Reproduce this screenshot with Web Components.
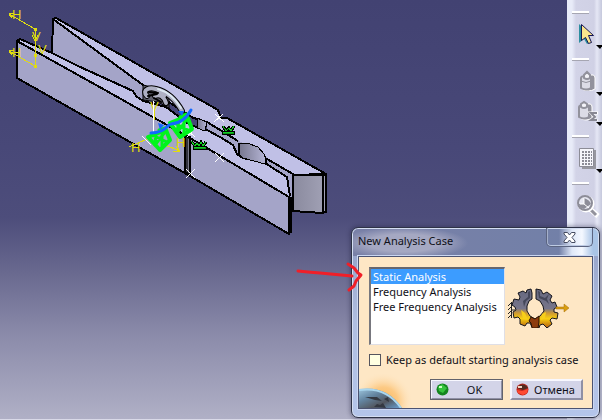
<!DOCTYPE html>
<html lang="en">
<head>
<meta charset="utf-8">
<title>New Analysis Case</title>
<style>
  body {
    margin: 0;
    font-family: "Noto Sans", "Open Sans", sans-serif;
    font-size: 11px;
    color: #101018;
  }
</style>
</head>
<body>

<cad-workbench>
  <model-view></model-view>
  <tool-bar slot="tools"></tool-bar>
  <case-dialog slot="dialog" heading="New Analysis Case">
    <case-form></case-form>
  </case-dialog>
  <pointer-mark slot="dialog"></pointer-mark>
</cad-workbench>

<script>
class CadWorkbench extends HTMLElement {
  constructor() {
    super();
    this.attachShadow({ mode: 'open' });
  }

  connectedCallback() {
    this.shadowRoot.innerHTML = `
      <style>
        :host {
          display: grid;
          grid-template-columns: 1fr auto;
          position: relative;
          min-height: 100vh;
          overflow: hidden;
        }
      </style>
      <slot></slot>
      <slot name="tools"></slot>
      <slot name="dialog"></slot>
    `;
  }
}

// The 3D area with the clothespin
class ModelView extends HTMLElement {
  constructor() {
    super();
    this.attachShadow({ mode: 'open' });
  }

  connectedCallback() {
    this.shadowRoot.innerHTML = `
      <style>
        :host {
          display: block;
          overflow: hidden;
          background: linear-gradient(#424272 0%, #484878 35%, #4d4d7b 52%, #69698f 65%, #8b8baa 80%, #b0b0c6 100%);
          border-bottom: 1px solid #d9d9e8;
        }
        svg { display: block; }
        text { font-family: "Liberation Sans", sans-serif; font-size: 13px; fill: #e0dc10; }
      </style>
      <svg width="340" height="250" viewBox="0 0 340 250">
        <defs>
          <linearGradient id="bore"><stop offset="0" stop-color="#77778f"/><stop offset="1" stop-color="#b6b6d6"/></linearGradient>
          <linearGradient id="end"><stop offset="0" stop-color="#8a8a9e"/><stop offset="1" stop-color="#a2a2b6"/></linearGradient>
        </defs>
        <g stroke="#000" stroke-width="2" stroke-linejoin="round" shape-rendering="crispEdges">
          <!-- back jaw -->
          <path fill="#a4a4c8" d="M53 19 L143 85 L160 108 L130 110 L52 53Z"/>
          <path fill="#c0c0e6" d="M53 19 L56 18 L218 110 L221 118 L227 118 L326 174 L293 175 L267 160 L238 142 L207 124 L190 116 L143 85Z"/>
          <path fill="url(#end)" d="M293 175 L326 175 L326 212 L322 213 L293 211Z"/>
          <path fill="none" d="M323 176V213"/>
          <!-- front jaw -->
          <path fill="#a4a4c8" stroke="none" d="M207 122 L238 140 L292 173 L292 205 L207 150Z"/>
          <path fill="#c0c0e6" stroke="none" d="M17 41 L20 39 L52 53 L78 66 L133 91 L136 96 L143 101 L166 107 L190 125 L207 130 L220 137 L233 145 L237 154 L243 158 L265 163 L287 177 L290 196 L289 197 L190 138 L105 90Z"/>
          <path fill="none" d="M17 41 L20 39 L52 53 L78 66 L133 91 L136 96 L143 101 L166 107 L190 125 L207 130 L220 137 L233 145 L237 154 L243 158 L265 163 L287 177 L290 196"/>
          <path fill="#a4a4c8" d="M17 41 L105 90 L190 138 L289 197 L289 234 L190 176 L17 78Z"/>
          <path stroke-width="3" d="M290 197V233"/>
          <path fill="url(#bore)" stroke-width="1" d="M239 143 L247 143 L258 147 L264 154 L266 159 L265 164 L243 158 L239 155Z"/>
          <path fill="url(#bore)" stroke-width="1" d="M197 118 L207 122 L205 131 L197 128Z"/>
          <path fill="none" d="M267 159 L293 174 V211"/>
          <path fill="none" d="M239 143V156M266 158V165M207 122L238 141M191 117L197 119"/>
          <path fill="#33333d" d="M185 136 L190 137 V174 L185 172Z"/>
          <path stroke="#777788" stroke-width="1" d="M188 139V173"/>
        </g>

        <!-- spring -->
        <path fill="#61616f" stroke="#000" stroke-width="1" d="M143 85 L160 89 L169 98 V108 L158 102 L143 100Z"/>
        <g fill="none" stroke-linecap="round">
          <path stroke="#000" stroke-width="6" d="M147 96 C141 90 150 86 158 90 L164 96 M155 96 C159 94 164 96 166 103 M156 89 Q172 93 182 111"/>
          <path stroke="#aeb0c3" stroke-width="4" d="M147 96 C141 90 150 86 158 90 L164 96 M155 96 C159 94 164 96 166 103 M156 89 Q172 93 182 111"/>
          <path stroke="#000" stroke-width="2" d="M148 96 L157 94 M154 98 L161 102 M149 92 L158 93"/>
          <path stroke="#dce8f2" stroke-width="2" d="M158 89 Q172 93 181 108"/>
        </g>

        <!-- axis systems -->
        <g fill="none" stroke="#e0dc10" stroke-width="1" shape-rendering="crispEdges">
          <path d="M9 14 L35 29 M9 51 L35 66 M35 29V66 M32 35 L35 41 L38 35 M9 14L14 13M9 14L12 18M9 51L14 50M9 51L12 55"/>
          <path d="M129 147 L147 139 M180 151 L165 145 M180 151 L176 146 M180 151 L173 152 M154 110V120"/>
        </g>
        <path fill="#e0dc10" d="M34 28h3v3h-3z M34 54h3v3h-3z M34 65h3v3h-3z"/>
        <text x="12" y="19">H</text>
        <text x="12" y="57">H</text>
        <text x="32" y="41">V</text>
        <text x="38" y="54">V</text>
        <text x="150" y="111">V</text>
        <text x="131" y="152">H</text>
        <text x="176" y="147">H</text>

        <!-- loads -->
        <path stroke="#fff" fill="none" shape-rendering="crispEdges" d="M153.500 101V135 M142 136l9 9 M215 114l9 8 M223 114l-9 8 M215 153l9 9 M224 153l-9 9 M186 169l9 9 M195 169l-9 9 M187 130l8 7 M194 129l-7 8"/>
        <g fill="none" stroke="#00f51c" stroke-width="4" stroke-linejoin="round" stroke-linecap="round">
          <path d="M148 137 L166 130 L170 140 L160 150 Z"/>
          <path d="M170 123 L187 116 L192 129 L180 137 Z"/>
          <path stroke-width="3" d="M152 135 L167 142 M156 133 L155 143 M165 132 L155 145 M162 134V146 M159 130l6-2"/>
          <path stroke-width="3" d="M174 123 L190 131 M179 120 L177 132 M187 119 L177 133 M184 120V134 M180 117l6-3"/>
        </g>
        <path fill="none" stroke="#1269ff" stroke-width="3" stroke-linecap="round" d="M151 133 Q162 133 169 125 M171 124 Q184 123 191 110"/>
        <path fill="#1269ff" d="M158 123l6 2-4 5z M178 111l6 0-2 5z"/>
        <!-- restraints -->
        <g shape-rendering="crispEdges">
          <path fill="#0a9918" stroke="#000" d="M222 131h12v3h-12z"/>
          <path fill="none" stroke="#000" stroke-width="3" d="M223 126l3 5 3-3 2 3 3-5"/>
          <path fill="none" stroke="#16cc24" stroke-width="1" d="M223 126l3 5 3-3 2 3 3-5M223 132h10"/>
          <path fill="#0a9918" stroke="#000" d="M193 146h13v3h-13z"/>
          <path fill="none" stroke="#000" stroke-width="3" d="M191 141l4 5 2-3 2 3 2-4 2 4 3-4"/>
          <path fill="none" stroke="#16cc24" stroke-width="1" d="M191 141l4 5 2-3 2 3 2-4 2 4 3-4M194 147h11"/>
        </g>
      </svg>
    `;
  }
}

class ToolBar extends HTMLElement {
  constructor() {
    super();
    this.attachShadow({ mode: 'open' });
  }

  connectedCallback() {
    this.shadowRoot.innerHTML = `
      <style>
        :host {
          display: flex;
          flex-direction: column;
          box-sizing: border-box;
          width: 35px;
          padding-top: 11px;
          background: linear-gradient(90deg, #e8ebf8 0, #e8ebf8 5px, #d2d3e7 9px, #d0d1e5 27px, #e5e7f5 30px, #c5c8dc 35px);
        }
        hr {
          box-sizing: border-box;
          width: 17px;
          height: 3px;
          margin: 0 0 0 5px;
          border: 0;
          border-top: 1px solid #fff;
          border-bottom: 1px solid #a6a6b2;
          background: #fff;
          flex: none;
        }
        button {
          display: flex;
          width: 35px;
          padding: 0;
          border: 0;
          background: none;
          flex: none;
        }
        .tall { height: 44px; }
        .short { height: 30px; }
        svg { display: block; }
      </style>
      <hr>
      <button class="tall" aria-label="Select">
        <svg width="35" height="44" viewBox="0 14 35 44">
          <path fill="#2b8ea0" d="M12 24v19l5-4 3 5 4-2-3-6 3-1z"/>
          <path fill="#fbe58c" stroke="#151552" stroke-width="1" d="M14.500 24.500v16l4-3 3 6 3-1-3-7h5z"/>
          <path fill="#000" d="M29 45h7l-3 4z"/>
        </svg>
      </button>
      <hr>
      <button class="short" aria-label="Compute">
        <svg width="35" height="30" viewBox="0 61 35 30">
          <path fill="#92929c" stroke="#fff" d="M15 78q0-3 4-3h7q2 0 2 3v11q-7 4-13 0z"/>
          <path fill="#dcdce6" stroke="#92929c" stroke-width="2" d="M14 78q0-2 5-2t5 2v10q-5 3-10 0z"/>
          <path fill="#f3f3f8" stroke="#92929c" stroke-width="2" d="M17 78v-3l3-3 3 3v3q-3 2-6 0z"/>
          <path fill="none" stroke="#92929c" d="M14 81q5 3 10 0"/>
        </svg>
      </button>
      <button class="short" aria-label="Compute sum">
        <svg width="35" height="30" viewBox="0 91 35 30">
          <path fill="#000" d="M29 92h7l-3 4z"/>
          <path fill="#92929c" stroke="#fff" d="M13 107q0-3 4-3h6q2 0 2 3v11q-6 4-12 0z"/>
          <path fill="#dcdce6" stroke="#92929c" stroke-width="2" d="M12 107q0-2 5-2t5 2v10q-5 3-10 0z"/>
          <path fill="#f3f3f8" stroke="#92929c" stroke-width="2" d="M14 107v-3l3-2 3 2v3q-3 2-6 0z"/>
          <path fill="none" stroke="#fff" stroke-width="3" d="M31 113h-7l4 4-4 4h7"/>
          <path fill="none" stroke="#888893" stroke-width="2" d="M30 113h-6l4 4-4 3h6"/>
        </svg>
      </button>
      <svg width="35" height="14" viewBox="0 121 35 14"><path fill="#000" d="M29 122h7l-3 4z"/></svg>
      <hr>
      <button class="tall" aria-label="Mesh table">
        <svg width="35" height="46" viewBox="0 138 35 46">
          <path fill="#97979f" d="M15 150h14v19h-14z"/>
          <path fill="#f6f6fb" stroke="#8c8c96" d="M12.500 148.500h14v18h-14z"/>
          <path stroke="#8c8c96" stroke-width="2" stroke-dasharray="2 1" d="M15 152h10M15 155h10M15 158h10M15 161h10M15 164h10"/>
          <path fill="#000" d="M29 169h7l-3 4z"/>
        </svg>
      </button>
      <hr>
      <button class="tall" aria-label="Inspect">
        <svg width="35" height="44" viewBox="0 186 35 44">
          <path stroke="#fff" stroke-width="5" d="M23 210l8 7"/>
          <path stroke="#92929c" stroke-width="3" d="M22 209l7 7"/>
          <circle cx="19" cy="205" r="7" fill="#dfe0ec" stroke="#fff" stroke-width="3"/>
          <circle cx="18" cy="204" r="7" fill="#e6e7f1" stroke="#8d8d98" stroke-width="2"/>
          <path fill="#8d8d98" d="M17 199v6h-5q0 4 5 5l7-5q-1-4-7-6z"/>
          <path fill="none" stroke="#fff" d="M17 199v6l5 4M13 205h4"/>
        </svg>
      </button>
    `;
  }
}

// Glass window frame, the content is passed in
class CaseDialog extends HTMLElement {
  constructor() {
    super();
    this.attachShadow({ mode: 'open' });
  }

  connectedCallback() {
    this.shadowRoot.innerHTML = `
      <style>
        :host {
          position: absolute;
          right: 2px;
          bottom: 2px;
          box-sizing: border-box;
          width: 249px;
          padding: 0 6px 8px;
          border: 1px solid #2e3346;
          border-radius: 7px;
          background:
            linear-gradient(90deg, transparent 207px, #dfe8f8 220px, #f4f8ff 230px, #a9c4e6 241px) top / 100% 28px no-repeat,
            radial-gradient(ellipse 64px 16px at 52px 15px, #a5a8c2 55%, transparent) top left / 150px 28px no-repeat,
            linear-gradient(90deg, #7980a7, #7180a8) top / 100% 28px no-repeat,
            linear-gradient(#8f9cc3, #b0bee0 50%, #b4c5ea);
          box-shadow: inset 0 0 0 1px #d5def2, 0 0 4px 1px rgba(30, 30, 60, 0.4);
        }
        header {
          display: flex;
          justify-content: space-between;
          align-items: flex-start;
          height: 28px;
        }
        h1 {
          margin: 0;
          font-size: 11px;
          line-height: 26px;
          font-weight: 400;
        }
        button {
          display: flex;
          justify-content: center;
          align-items: center;
          width: 47px;
          height: 19px;
          padding: 0;
          background: none;
          border: 1px solid #5b6480;
          border-top: 0;
          border-radius: 0 0 5px 5px;
          box-shadow: inset 0 -1px 0 #bdcae3, inset 1px 0 0 #a4afca;
        }
        main {
          border: 1px solid #4b5372;
          box-shadow: 0 0 0 1px #cbd7f2;
          background: #fee7c5;
        }
      </style>
      <header>
        <h1>${this.getAttribute('heading')}</h1>
        <button aria-label="Close">
          <svg width="13" height="11" viewBox="0 0 13 11">
            <path fill="#fff" stroke="#454b60" d="M1 .5h3.500l2 2.500 2-2.500h3.500v1.500l-3 3.500 3 3.500v1.500h-3.500l-2-2.500-2 2.500h-3.500v-1.500l3-3.500-3-3.500z"/>
          </svg>
        </button>
      </header>
      <main><slot></slot></main>
    `;
  }
}

class CaseForm extends HTMLElement {
  constructor() {
    super();
    this.attachShadow({ mode: 'open' });
  }

  connectedCallback() {
    const cases = ['Static Analysis', 'Frequency Analysis', 'Free Frequency Analysis'];

    this.shadowRoot.innerHTML = `
      <style>
        :host { display: block; position: relative; }
        form {
          display: flex;
          flex-direction: column;
          padding: 10px 9px 8px 10px;
        }
        .choice { display: flex; gap: 3px; }
        select {
          box-sizing: border-box;
          width: 136px;
          height: 78px;
          padding: 0;
          border: 1px solid #dfdfe6;
          border-top: 2px solid #66666e;
          border-left: 2px solid #77777e;
          border-radius: 0;
          background: #fff;
          color: #101018;
          font: inherit;
          overflow: hidden;
          outline: 0;
          scrollbar-width: none;
        }
        option {
          box-sizing: border-box;
          height: 15px;
          min-height: 15px;
          padding: 0 2px;
          line-height: 15px;
        }
        option:checked {
          background: #3c9cff linear-gradient(#3c9cff, #3c9cff);
          color: #fff;
          -webkit-text-fill-color: #fff;
        }
        .gear { margin-top: 19px; flex: none; }
        label {
          display: flex;
          align-items: center;
          gap: 5px;
          margin-top: 6px;
          line-height: 18px;
          white-space: nowrap;
        }
        input {
          appearance: none;
          box-sizing: border-box;
          width: 12px;
          height: 12px;
          margin: 0;
          border: 1px solid #55555e;
          background: #ffffe2;
          flex: none;
        }
        .actions {
          display: flex;
          justify-content: flex-end;
          gap: 7px;
          margin-top: 10px;
        }
        .actions button {
          display: flex;
          align-items: center;
          box-sizing: border-box;
          width: 73px;
          height: 21px;
          padding: 0 4px;
          gap: 3px;
          border: 2px solid;
          border-color: #f8f8ff #8f90a5 #8f90a5 #f8f8ff;
          background: #d3d4e8;
          color: inherit;
          font: inherit;
        }
        .actions .ok { outline: 1px solid #62626c; outline-offset: -1px; }
        .actions span { flex: 1; text-align: center; }
        .actions svg { flex: none; }
        .planet { position: absolute; left: 0; bottom: 0; }
      </style>
      <svg class="planet" width="54" height="34" viewBox="0 0 54 34">
        <defs>
          <radialGradient id="glow" cx="24" cy="28" r="30" gradientUnits="userSpaceOnUse">
            <stop offset="0" stop-color="#f9b458"/><stop offset=".5" stop-color="#fcca85"/><stop offset="1" stop-color="#fee7c5" stop-opacity="0"/>
          </radialGradient>
          <linearGradient id="globe" x2="1" y2="1">
            <stop offset="0" stop-color="#9fc7df"/><stop offset=".35" stop-color="#6384a0"/><stop offset=".65" stop-color="#52565e"/><stop offset="1" stop-color="#6aa3d8"/>
          </linearGradient>
        </defs>
        <path fill="url(#glow)" d="M0 0H54V34H0z"/>
        <path fill="url(#globe)" d="M0 15Q28 11 43 34H0z"/>
        <path fill="none" stroke="#a9d6ee" stroke-width="2" d="M0 16Q27 12 42 34"/>
        <path fill="#343841" d="M15 33l3-3 3 1 3-2 3 5zM6 23l10 3 7 1-5-4zM25 25l5 3-1-5z"/>
      </svg>
      <form>
        <div class="choice">
          <select size="5" aria-label="Analysis case">
            ${cases.map((name, i) => `<option${i === 0 ? ' selected' : ''}>${name}</option>`).join('')}
          </select>
          <svg class="gear" width="62" height="42" viewBox="507 286 62 42">
            <defs>
              <linearGradient id="heat" x1="0" x2="0" y1="289" y2="328" gradientUnits="userSpaceOnUse">
                <stop offset="0" stop-color="#66687f"/><stop offset=".5" stop-color="#77758a"/><stop offset=".62" stop-color="#cf9a32"/><stop offset=".76" stop-color="#f8cf10"/><stop offset="1" stop-color="#b35a12"/>
              </linearGradient>
            </defs>
            <path fill="none" stroke="#222" d="M510.500 302V318M510 303l-3 3M510 307l-3 3M510 311l-3 3M510 315l-3 3M511 310h3"/>
            <path fill="url(#heat)" stroke="#15151c" stroke-linejoin="round" d="M526 290l4-1 1 4 0 6-3 2-2 5 0 5 3 5 5 3v8h-3l-2-4-3 0-2 3-5-2 0-5-2-2-4 1-1-6 3-2-1-3-3-2 2-6 5 1 1-3-2-4 5-2 3 2z"/>
            <path fill="url(#heat)" stroke="#15151c" stroke-linejoin="round" d="M535 289l5 1 2 4 4-2 5 4-2 4 2 3 3-1 2 5-3 2v3l4 1-1 6-5-1-2 2 2 4-5 4-4-4-3 1-1 3h-4v-9l5-3 4-5-1-5-3-5-4-2z"/>
            <path fill="#45475a" d="M527 292l2-1v7l-4 3-2 6-1-6 5-4zM537 291l2 1 0 4 5 2 4-4-2 5 2 5-3-3-7-3z"/>
            <path fill="#8e3c0d" stroke="#291405" d="M530 317l4 2 4-3v6l-1 6h-6l-1-5-2-2z"/>
            <path fill="#f7cf18" d="M520 310l4 3 3 7-5-1zM545 312l-4 2-1 6 4-2z"/>
            <path fill="#d99d10" stroke="#a76f05" stroke-width=".5" d="M555 307h8v-3l5 4-5 4v-3h-8z"/>
          </svg>
        </div>
        <label><input type="checkbox">Keep as default starting analysis case</label>
        <div class="actions">
          <button class="ok" type="button">
            <svg width="13" height="13" viewBox="0 0 13 13"><circle cx="6.500" cy="6.500" r="6" fill="#14851f"/><path fill="#36c33d" d="M2 4l4-3 5 4-4 5-4-2z"/><path fill="#c8ffc0" d="M3 3h3v2H3z"/></svg>
            <span>OK</span>
          </button>
          <button type="button">
            <svg width="13" height="13" viewBox="0 0 13 13"><circle cx="6.500" cy="6.500" r="6" fill="#c3271d"/><path fill="#522b20" d="M1 5a6 6 0 0 1 11 0l-5 2z"/><path fill="#f0d4c4" d="M2 3h4v2H2z"/><path fill="#ff4b33" d="M1 7l5 1 6-2-1 4-4 2-5-2z"/></svg>
            <span>Отмена</span>
          </button>
        </div>
      </form>
    `;
  }
}

// Hand-drawn red arrow that lies over the dialog edge
class PointerMark extends HTMLElement {
  constructor() {
    super();
    this.attachShadow({ mode: 'open' });
  }

  connectedCallback() {
    this.shadowRoot.innerHTML = `
      <style>
        :host { position: absolute; right: 238px; bottom: 126px; pointer-events: none; }
        svg { display: block; }
      </style>
      <svg width="68" height="34" viewBox="296 260 68 34">
        <path fill="none" stroke="#f01f28" stroke-width="3" stroke-linecap="round" stroke-linejoin="round" d="M298 271L308 272 320 273 352 276 M348 264L354 268 358 273 361 275 356 281 354 286 349 290"/>
      </svg>
    `;
  }
}

customElements.define('cad-workbench', CadWorkbench);
customElements.define('model-view', ModelView);
customElements.define('tool-bar', ToolBar);
customElements.define('case-dialog', CaseDialog);
customElements.define('case-form', CaseForm);
customElements.define('pointer-mark', PointerMark);
</script>
</body>
</html>
